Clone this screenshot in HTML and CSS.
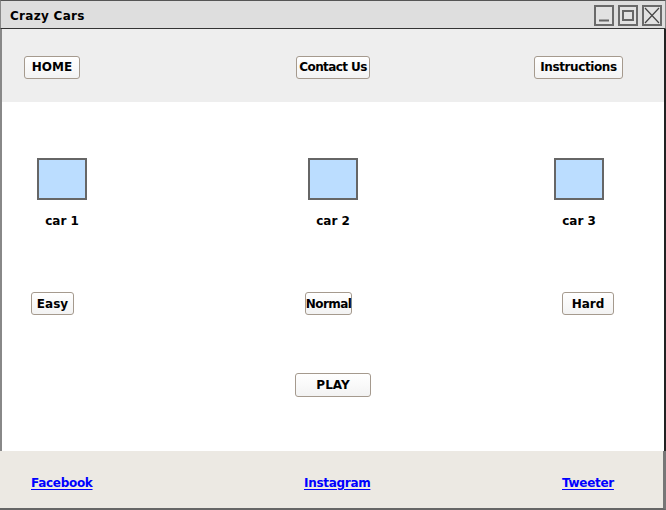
FILE: index.html
```html
<!DOCTYPE html>
<html>
<head>
<meta charset="utf-8">
<link rel="stylesheet" href="styles.css">
</head>
<body>
<div class="window">
  <div class="titlebar">
    <span class="title">Crazy Cars</span>
    <div class="winbtns">
      <span class="wbtn"><svg width="16" height="17" viewBox="0 0 16 17"><line x1="3" y1="13.5" x2="13" y2="13.5" stroke="#666" stroke-width="2"/></svg></span>
      <span class="wbtn"><svg width="16" height="17" viewBox="0 0 16 17"><rect x="3" y="4" width="10" height="9" fill="none" stroke="#666" stroke-width="2"/></svg></span>
      <span class="wbtn"><svg width="16" height="17" viewBox="0 0 16 17"><path d="M1 1 L15 16 M15 1 L1 16" stroke="#444" stroke-width="1.2" fill="none"/></svg></span>
    </div>
  </div>
  <nav class="nav">
    <span class="btn btn-home">HOME</span>
    <span class="btn btn-contact">Contact Us</span>
    <span class="btn btn-instr">Instructions</span>
  </nav>
  <main class="content">
    <div class="cars">
      <div class="car car1"><div class="thumb"></div><span class="label">car 1</span></div>
      <div class="car car2"><div class="thumb"></div><span class="label">car 2</span></div>
      <div class="car car3"><div class="thumb"></div><span class="label">car 3</span></div>
    </div>
    <div class="levels">
      <span class="btn lvl easy">Easy</span>
      <span class="btn lvl normal">Normal</span>
      <span class="btn lvl hard">Hard</span>
    </div>
    <div class="playrow">
      <span class="btn play">PLAY</span>
    </div>
  </main>
  <footer class="footer">
    <span class="slot slot-fb"><a href="#" class="link">Facebook</a></span>
    <span class="slot slot-ig"><a href="#" class="link">Instagram</a></span>
    <span class="slot"><a href="#" class="link">Tweeter</a></span>
  </footer>
</div>
</body>
</html>
```

FILE: styles.css
```css
* { box-sizing: border-box; }
html, body { margin: 0; padding: 0; background: #fff; }
body {
  font-family: "Comic Sans MS", "DejaVu Sans", sans-serif;
  font-weight: bold;
  color: #000;
}
.window {
  width: 666px;
  height: 510px;
  display: flex;
  flex-direction: column;
}
.titlebar {
  height: 29px;
  background: #dedede;
  border-top: 1px solid #555;
  border-left: 1px solid #888;
  border-right: 1px solid #888;
  border-bottom: 1px solid #333;
  display: flex;
  align-items: center;
  padding-left: 9px;
}
.title {
  font-size: 12px;
  letter-spacing: 0.3px;
  margin-top: 2px;
}
.winbtns {
  margin-left: auto;
  display: flex;
  gap: 4px;
  margin-right: 3px;
  margin-top: 1px;
}
.wbtn {
  width: 20px;
  height: 21px;
  border: 2px solid #6a6a6a;
  background: #e2e2e2;
  display: flex;
}
.nav {
  height: 73px;
  background: #eeeeee;
  border-left: 2px solid #888;
  border-right: 2px solid #222;
  display: flex;
  align-items: center;
  padding-top: 3px;
}
.btn {
  display: inline-flex;
  align-items: center;
  justify-content: center;
  height: 23px;
  border: 1px solid #a59a8e;
  border-radius: 3px;
  background: linear-gradient(#ffffff, #f3f3f3);
  font-size: 12px;
  white-space: nowrap;
}
.btn-home { width: 56px; margin-left: 22px; }
.btn-contact { width: 74px; margin-left: 216px; letter-spacing: -0.6px; }
.btn-instr { width: 89px; margin-left: 164px; letter-spacing: -0.4px; }
.content {
  flex: 1;
  border-left: 2px solid #888;
  border-right: 2px solid #222;
  display: flex;
  flex-direction: column;
}
.cars {
  display: flex;
  margin-top: 56px;
}
.car {
  width: 50px;
  display: flex;
  flex-direction: column;
  align-items: center;
}
.car1 { margin-left: 35px; }
.car2 { margin-left: 221px; }
.car3 { margin-left: 196px; }
.thumb {
  width: 50px;
  height: 42px;
  background: #bbddff;
  border: 2px solid #666;
}
.label {
  font-size: 12px;
  margin-top: 14px;
  white-space: nowrap;
}
.levels {
  display: flex;
  margin-top: 64px;
}
.lvl { height: 23px; }
.easy { width: 43px; margin-left: 29px; }
.normal { width: 47px; margin-left: 231px; letter-spacing: -0.6px; }
.hard { width: 52px; margin-left: 210px; }
.playrow {
  display: flex;
  margin-top: 58px;
}
.play { width: 76px; margin-left: 293px; height: 24px; }
.footer {
  height: 59px;
  width: 666px;
  background: #ece9e3;
  border-right: 3px solid #777;
  border-bottom: 2px solid #666;
  display: flex;
  align-items: center;
  padding-top: 3px;
  padding-left: 31px;
}
.slot { display: inline-block; }
.slot-fb { width: 273px; }
.slot-ig { width: 258px; }
.link {
  color: #0000ff;
  font-size: 12px;
  letter-spacing: -0.3px;
  text-decoration: underline;
  text-underline-offset: 2px;
  text-decoration-thickness: 1px;
}
```
